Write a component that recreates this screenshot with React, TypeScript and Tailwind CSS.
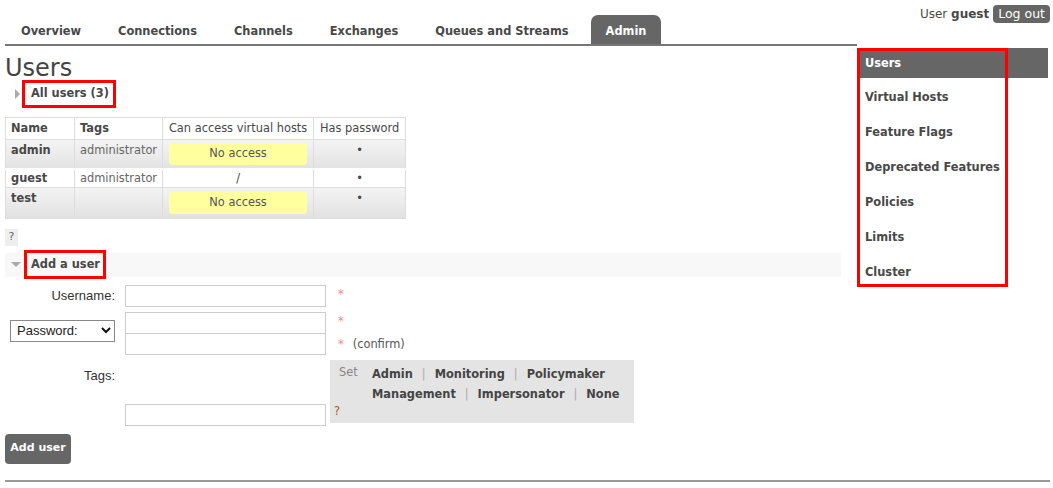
import React from "react";

const font = { fontFamily: '"DejaVu Sans", Verdana, sans-serif' };

function Tab({ label, active }: { label: string; active?: boolean }) {
  return (
    <div
      className={
        "h-[29px] flex items-end pb-[4px] px-[15px] text-[11.4px] font-bold rounded-t-[7px] " +
        (active ? "bg-[#666] text-white" : "text-[#484848]")
      }
    >
      {label}
    </div>
  );
}

function NoAccess({ tall }: { tall?: boolean }) {
  return (
    <div
      className={
        "mx-[6px] h-[22px] rounded-[4px] bg-[#ffff9e] flex items-center justify-center text-[#555] " +
        (tall ? "my-[4px]" : "my-[3px]")
      }
    >
      No access
    </div>
  );
}

export default function App() {
  const side = ["Virtual Hosts", "Feature Flags", "Deprecated Features", "Policies", "Limits", "Cluster"];
  const sep = <span className="font-normal text-[#aaa] mx-[5px]">|</span>;
  return (
    <div className="relative w-[1053px] h-[488px] bg-white text-[#484848] overflow-hidden" style={font}>
      {/* top-right user */}
      <div className="absolute right-[3px] top-[5px] flex items-center gap-[4px] text-[12px] text-[#484848]">
        <span>
          User <b>guest</b>
        </span>
        <span className="bg-[#666] text-white rounded-[4px] px-[5px] h-[18px] flex items-center text-[12.5px]">Log out</span>
      </div>

      {/* tabs */}
      <div className="pt-[15px] pl-[5px] pr-[196px]">
        <div className="flex border-b-[2px] border-[#777] pl-[1px] gap-[7px]">
          <Tab label="Overview" />
          <Tab label="Connections" />
          <Tab label="Channels" />
          <Tab label="Exchanges" />
          <Tab label="Queues and Streams" />
          <Tab label="Admin" active />
        </div>
      </div>

      <div className="flex">
        {/* main */}
        <div className="w-[841px] pl-[5px]">
          <h1 className="text-[24px] leading-[28px] mt-[8px] text-[#444]">Users</h1>
          <div className="flex items-center h-[24px]">
            <span className="ml-[10px] w-0 h-0 border-y-[5px] border-y-transparent border-l-[5px] border-l-[#aaa]" />
            <span className="relative ml-[8px] text-[11.4px] font-bold px-[3px]">
              All users (3)
              <span className="absolute -left-[6px] -right-[4px] -top-[5px] -bottom-[5px] border-[3px] border-[#ff0000]" />
            </span>
          </div>

          <table className="mt-[11px] text-[11.4px] border-collapse whitespace-nowrap">
            <thead>
              <tr className="h-[22px]">
                <th className="w-[69px] border border-[#ddd] text-left px-[5px] font-bold">Name</th>
                <th className="w-[88px] border border-[#ddd] text-left px-[5px] font-bold">Tags</th>
                <th className="w-[151px] border border-[#ddd] font-normal px-[5px]">Can access virtual hosts</th>
                <th className="w-[92px] border border-[#ddd] font-normal px-[5px]">Has password</th>
              </tr>
            </thead>
            <tbody>
              <tr className="bg-gradient-to-b from-[#f4f4f4] to-[#e2e2e2]">
                <td className="border border-[#ddd] px-[5px] align-top pt-[2px] font-bold">admin</td>
                <td className="border border-[#ddd] px-[5px] align-top pt-[2px] text-[#666]">administrator</td>
                <td className="border border-[#ddd] p-0"><NoAccess /></td>
                <td className="border border-[#ddd] text-center align-top pt-[2px]">•</td>
              </tr>
              <tr className="h-[18px] border-t-[2px] border-t-white">
                <td className="border border-[#ddd] px-[5px] font-bold leading-[16px]">guest</td>
                <td className="border border-[#ddd] px-[5px] text-[#666] leading-[16px]">administrator</td>
                <td className="border border-[#ddd] text-center leading-[16px]">/</td>
                <td className="border border-[#ddd] text-center leading-[16px]">•</td>
              </tr>
              <tr className="bg-gradient-to-b from-[#f4f4f4] to-[#e2e2e2]">
                <td className="border border-[#ddd] px-[5px] align-top pt-[2px] font-bold">test</td>
                <td className="border border-[#ddd] px-[5px]"></td>
                <td className="border border-[#ddd] p-0"><NoAccess tall /></td>
                <td className="border border-[#ddd] text-center align-top pt-[2px]">•</td>
              </tr>
            </tbody>
          </table>

          <div className="mt-[10px] w-[13px] h-[17px] bg-[#eee] text-[11px] text-[#666] flex items-center justify-center">?</div>

          <div className="mt-[7px] h-[24px] bg-[#f8f8f8] flex items-center">
            <span className="ml-[6px] w-0 h-0 border-x-[5px] border-x-transparent border-t-[5px] border-t-[#aaa]" />
            <span className="relative ml-[8px] text-[11.4px] font-bold px-[2px]">
              Add a user
              <span className="absolute -left-[5px] -right-[4px] -top-[6px] -bottom-[6px] border-[3px] border-[#ff0000]" />
            </span>
          </div>

          {/* form */}
          <div className="mt-[8px] grid grid-cols-[110px_201px_1fr] gap-x-[10px] text-[11.4px]">
            <div className="flex items-center justify-end h-[22px] text-[#333]" style={{ fontFamily: '"Liberation Sans", Arial, sans-serif' }}>
              <span className="text-[13px]">Username:</span>
            </div>
            <div className="h-[22px] border border-[#ccc] bg-white" />
            <div className="h-[22px] flex items-start pt-[1px] pl-[2px] text-[#f88]">*</div>

            <div className="flex items-start pt-[8px] mt-[5px]">
              <div
                className="ml-[5px] w-[105px] h-[22px] border border-[#888] flex items-center justify-between pl-[6px] pr-[3px] text-[13px] text-[#222]"
                style={{ fontFamily: '"Liberation Sans", Arial, sans-serif' }}
              >
                <span>Password:</span>
                <svg width="10" height="7" viewBox="0 0 10 7"><path d="M1 1l4 4 4-4" fill="none" stroke="#111" strokeWidth="2" /></svg>
              </div>
            </div>
            <div className="mt-[5px] flex flex-col">
              <div className="h-[22px] border border-[#ccc] bg-white" />
              <div className="h-[22px] -mt-[1px] border border-[#ccc] bg-white" />
            </div>
            <div className="mt-[5px] flex flex-col pl-[2px]">
              <div className="h-[22px] text-[#f88] pt-[1px]">*</div>
              <div className="h-[22px] flex items-center"><span className="text-[#f88]">*</span><span className="ml-[9px] text-[#555]">(confirm)</span></div>
            </div>

            <div className="flex justify-end pt-[6px] mt-[4px] text-[#333]" style={{ fontFamily: '"Liberation Sans", Arial, sans-serif' }}>
              <span className="text-[13px]">Tags:</span>
            </div>
            <div className="mt-[4px] flex items-end">
              <div className="h-[22px] w-full border border-[#ccc] bg-white -mb-[3px]" />
            </div>
            <div className="mt-[4px] -ml-[6px]">
              <div className="w-[304px] h-[63px] bg-[#e4e4e4] relative">
                <span className="absolute left-[9px] top-[4px] text-[#888] text-[11.4px]">Set</span>
                <div className="absolute left-[42px] top-[4px] font-bold text-[11.4px] leading-[20px] text-[#444]">
                  <div>Admin {sep} Monitoring {sep} Policymaker</div>
                  <div>Management {sep} Impersonator {sep} None</div>
                </div>
                <span className="absolute left-[4px] bottom-[2px] text-[11.4px] text-[#a52]">?</span>
              </div>
            </div>
          </div>

          <div className="mt-[11px] w-[66px] h-[30px] bg-[#666] rounded-[4px] text-white font-bold text-[11px] flex items-center justify-center">
            Add user
          </div>
        </div>

        {/* sidebar */}
        <div className="relative w-[191px] ml-[16px] mt-[2px] text-[11.4px] font-bold">
          <div className="h-[30px] bg-[#666] text-white flex items-center pt-[2px] pl-[8px]">Users</div>
          {side.map((s) => (
            <div key={s} className="h-[35px] flex items-end pb-[7px] pl-[8px] text-[#484848]">
              {s}
            </div>
          ))}
          <div className="absolute left-0 top-0 w-[151px] h-[239px] border-[3px] border-[#ff0000]" />
        </div>
      </div>

      <div className="absolute left-[5px] right-[3px] top-[480px] h-[2px] bg-[#999]" />
    </div>
  );
}
